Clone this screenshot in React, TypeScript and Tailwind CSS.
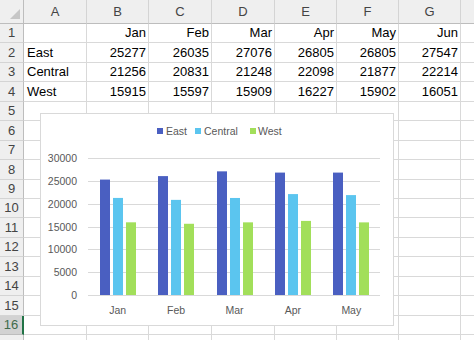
import React from "react";

const letters = ["A", "B", "C", "D", "E", "F", "G"];

const cells: Record<number, string[]> = {
  1: ["", "Jan", "Feb", "Mar", "Apr", "May", "Jun"],
  2: ["East", "25277", "26035", "27076", "26805", "26805", "27547"],
  3: ["Central", "21256", "20831", "21248", "22098", "21877", "22214"],
  4: ["West", "15915", "15597", "15909", "16227", "15902", "16051"],
};

const series = [
  { name: "East", color: "#4a5fc1", vals: [25277, 26035, 27076, 26805, 26805] },
  { name: "Central", color: "#5bc5ef", vals: [21256, 20831, 21248, 22098, 21877] },
  { name: "West", color: "#a2df5a", vals: [15915, 15597, 15909, 16227, 15902] },
];
const cats = ["Jan", "Feb", "Mar", "Apr", "May"];

function Chart() {
  const base = 182;
  const scale = 137 / 30000;
  const ticks = [0, 5000, 10000, 15000, 20000, 25000, 30000];
  const font = "'Liberation Sans', Arial, sans-serif";
  return (
    <div className="absolute left-[40px] top-[113px] w-[354px] h-[213px] bg-white border border-[#d9d9d9]">
      <svg className="absolute -left-px -top-px" width={354} height={213}>
        {[
          { x: 117, tx: 126, s: series[0] },
          { x: 155, tx: 164, s: series[1] },
          { x: 210, tx: 218, s: series[2] },
        ].map((l) => (
          <g key={l.s.name}>
            <rect x={l.x} y={15} width={6} height={6} fill={l.s.color} />
            <text x={l.tx} y={22} fontSize={10.5} fill="#595959" fontFamily={font}>
              {l.s.name}
            </text>
          </g>
        ))}
        {ticks.map((t) => {
          const y = Math.round(base - t * scale) + 0.5;
          return (
            <g key={t}>
              <line x1={48} x2={340} y1={y} y2={y} stroke="#d9d9d9" strokeWidth={1} />
              <text x={37} y={y + 3.5} fontSize={10.5} fill="#595959" textAnchor="end" fontFamily={font}>
                {t}
              </text>
            </g>
          );
        })}
        {cats.map((c, i) => {
          const cx = 77.7 + i * 58.4;
          return (
            <g key={c}>
              {series.map((s, j) => {
                const h = s.vals[i] * scale;
                return (
                  <rect
                    key={s.name}
                    x={Math.round(cx - 18 + j * 13)}
                    y={base - h}
                    width={10}
                    height={h}
                    fill={s.color}
                  />
                );
              })}
              <text x={cx} y={201} fontSize={10.5} fill="#595959" textAnchor="middle" fontFamily={font}>
                {c}
              </text>
            </g>
          );
        })}
      </svg>
    </div>
  );
}

export default function App() {
  const rows = Array.from({ length: 17 }, (_, i) => i + 1);
  return (
    <div
      className="relative w-[474px] h-[340px] overflow-hidden bg-white text-[13px] text-black"
      style={{ fontFamily: "'Liberation Sans', Arial, sans-serif" }}
    >
      <div className="grid grid-cols-[24px_63px_62px_63px_63px_62px_62px_62px_1fr] grid-rows-[24px_repeat(17,19.45px)]">
        <div className="relative bg-[#efefef] border-r border-b border-[#bdbdbd]">
          <div className="absolute right-[3px] bottom-[4px] w-0 h-0 border-l-[10px] border-l-transparent border-b-[10px] border-b-[#c6c6c6]" />
        </div>
        {letters.map((l) => (
          <div
            key={l}
            className="flex items-center justify-center bg-[#efefef] border-r border-r-[#d4d4d4] border-b border-b-[#bdbdbd] text-[#444]"
          >
            {l}
          </div>
        ))}
        <div className="bg-[#efefef] border-b border-b-[#bdbdbd]" />
        {rows.map((r) => (
          <React.Fragment key={r}>
            {r === 16 ? (
              <div className="flex items-center justify-center bg-[#d2d2d2] border-r-2 border-r-[#217346] border-b border-b-[#bdbdbd] text-[#3f6b4c]">
                {r}
              </div>
            ) : (
              <div className="flex items-center justify-center bg-[#efefef] border-r border-r-[#bdbdbd] border-b border-b-[#d4d4d4] text-[#444]">
                {r < 17 ? r : ""}
              </div>
            )}
            {letters.map((l, ci) => {
              const v = cells[r]?.[ci] ?? "";
              return (
                <div
                  key={l}
                  className={
                    "flex items-center border-r border-b border-[#d9d9d9] whitespace-nowrap overflow-hidden " +
                    (ci === 0 ? "justify-start pl-[3px]" : "justify-end pr-[2px]")
                  }
                >
                  {v}
                </div>
              );
            })}
            <div className="border-b border-[#d9d9d9]" />
          </React.Fragment>
        ))}
      </div>
      <Chart />
    </div>
  );
}
